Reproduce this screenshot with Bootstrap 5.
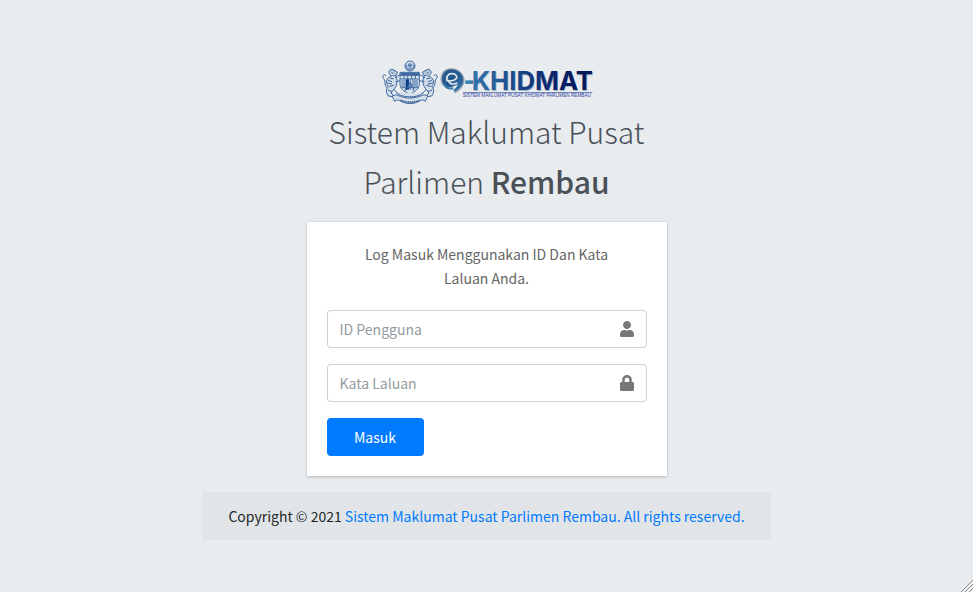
<!DOCTYPE html>
<html lang="ms">
<head>
<meta charset="utf-8">
<meta name="viewport" content="width=device-width, initial-scale=1">
<title>Log Masuk | e-Khidmat</title>
<link href="https://cdn.jsdelivr.net/npm/bootstrap@5.3.0/dist/css/bootstrap.min.css" rel="stylesheet">
<style>
body{background:#e9ecef;color:#212529;font-family:"Source Sans Pro","Noto Sans CJK SC",sans-serif;font-size:14px;line-height:24px}
.login-box{width:100%;max-width:360px}
.login-logo{font-size:30px;line-height:50px;font-weight:300;color:#495057;margin-bottom:16px}
.login-logo a{color:inherit}
.login-logo b{font-weight:500}
.login-card{background:#fff;padding:20px;box-shadow:0 0 1px rgba(0,0,0,.125),0 1px 3px rgba(0,0,0,.2);color:#666}
.login-msg{padding:0 20px;margin-bottom:20px}
.login-card .form-control,.login-card .input-group-text{border-color:#ced4da;font-size:14px;line-height:24px;border-radius:4px;height:38px}
.login-card .form-control{border-right:0}
.login-card .form-control::placeholder{color:#939ba2;opacity:1}
.login-card .input-group-text{background:#fff;color:#777}
.btn-login{background:#007bff;color:#fff;font-size:14px;line-height:24px;border-radius:4px;width:97px;height:38px}
.btn-login:hover{background:#0069d9;color:#fff}
.login-footer{background:#e2e5e8;padding:12px 26px}
.login-footer a{color:#007bff}
.logo-word{font-family:Inter,"Liberation Sans",sans-serif;font-weight:700;font-size:77px}
.logo-sub{font-family:"Liberation Sans",sans-serif;font-size:14px}
</style>
<script src="https://cdn.jsdelivr.net/npm/bootstrap@5.3.0/dist/js/bootstrap.bundle.min.js" defer></script>
</head>
<body class="min-vh-100 d-flex flex-column align-items-center justify-content-center position-relative">
<main class="login-box">
  <div class="login-logo text-center">
    <svg class="d-block mx-auto" width="220" height="54" viewBox="0 -12 660 162" role="img" aria-label="e-Khidmat">
      <defs>
        <linearGradient id="gw" gradientUnits="userSpaceOnUse" x1="260" y1="0" x2="650" y2="0"><stop offset="0" stop-color="#387fb3"/><stop offset=".35" stop-color="#1f4f91"/><stop offset=".7" stop-color="#08236c"/><stop offset="1" stop-color="#061752"/></linearGradient>
        <linearGradient id="ge" x1="0" y1="0" x2="1" y2="1"><stop offset="0" stop-color="#2c5f92"/><stop offset=".5" stop-color="#24568c"/><stop offset="1" stop-color="#387fb3"/></linearGradient>
        <g id="beast" fill="none" stroke="#3c669f" stroke-width="3" stroke-linecap="round">
          <path d="M36 31c-8-8-17 0-15 9l8 9 13-3 5-9-11-6z" fill="#bccbdc"/>
          <path d="M28 49C12 53 9 69 19 79c-9 8-7 20 0 29l13 2 1-6-6-5 11-14c9-12 9-27 3-38" fill="#d2dce7"/>
          <path d="M40 52l12-7 8 4M42 65l13-3 5 5M35 88l11 11 10 4M17 84C4 80 13 64 5 56c-7-9 2-17 7-9M19 61l10 4M17 69l12 3M23 79l11-3M19 91l10 3M29 37l4 3M25 55l9 1" />
        </g>
      </defs>
      <g transform="translate(9 12)">
        <use href="#beast" x="6"/>
        <use href="#beast" transform="translate(174 0) scale(-1 1)"/>
        <g fill="none" stroke="#4069a2" stroke-width="3">
          <circle cx="90" cy="18" r="15" fill="#dbe3eb"/>
          <path d="M79 14a12 12 0 1 0 22 0 12 9 0 1 1-22 0z" fill="#a9bdd5" stroke-width="2"/>
          <path d="M90 7l2 5 5-2-2 5 5 3-6 1 0 6-4-4-4 4 0-6-6-1 5-3-2-5 5 2z" fill="#5c80af" stroke="none"/>
          <path d="M60 37h58v34c0 17-15 25-29 31-15-6-29-14-29-31z" fill="#d8e1e9"/>
          <path d="M61 46h56M61 57h56M72 38v19M83 38v19M95 38v19M106 38v19"/>
          <path d="M61 38h56v8H61z" fill="#40699f" stroke="none"/>
          <path d="M64 58h12v24H64zM101 58h13v24h-13z" fill="#89a6c8" stroke="none"/>
          <path d="M77 58h10v31H77z" fill="#0d3c89" stroke="none"/>
          <path d="M91 58v31M99 58v30M64 83h50M76 84v10M101 84v9"/>
          <path d="M90 67l7 10-7 8-6-8z" fill="#5d82b4"/>
          <path d="M49 98c18 17 64 17 82 0M37 109c12-12 20 5 53 5s41-17 53-5l-7 15c-14-12-20 7-46 7s-33-19-46-7z" fill="#d4dee7"/>
          <path d="M61 121c17 7 42 7 59 0" stroke="#285391" stroke-width="5" stroke-dasharray="4 2"/>
        </g>
      </g>
      <g>
        <path d="M201 89c-14-16-9-45 17-49 24-3 44 16 42 36-2 16-14 26-27 34" fill="none" stroke="#a3adb8" stroke-width="6"/>
        <path d="M203 91c-16-18-8-48 16-51 22-3 41 15 40 34-1 14-9 23-25 33l-5-4c8-7 12-12 13-18-14 9-29 13-39 6z" fill="url(#ge)"/>
        <path d="M211 76c-6-13 3-24 15-23 13 1 17 11 9 17-6 5-15 5-21 4 4 11 14 13 27 6" fill="none" stroke="#dce5ed" stroke-width="5"/>
        <path d="M200 83c5 12 14 17 29 14" fill="none" stroke="#387fb3" stroke-width="6"/>
      </g>
      <path d="M265 73h23v11h-23z" fill="#397fb2"/>
      <text class="logo-word" x="286" y="106" fill="#a9b3be">KHIDMAT</text>
      <text class="logo-word" x="284" y="103" fill="url(#gw)">KHIDMAT</text>
      <path d="M258 109.500H646" stroke="#34539a" stroke-width="2"/>
      <text class="logo-sub" x="257" y="124" fill="#2940a0">SISTEM MAKLUMAT PUSAT KHIDMAT PARLIMEN REMBAU</text>
    </svg>
    <a href="#" class="text-decoration-none d-block">Sistem Maklumat Pusat Parlimen <b>Rembau</b></a>
  </div>
  <div class="login-card">
    <p class="login-msg text-center">Log Masuk Menggunakan ID Dan Kata Laluan Anda.</p>
    <form>
      <div class="input-group mb-3">
        <input type="text" class="form-control" id="userid" placeholder="ID Pengguna" aria-label="ID Pengguna">
        <label class="input-group-text" for="userid"><svg width="14" height="16" viewBox="0 0 448 512" fill="currentColor" aria-hidden="true"><path d="M224 256c70.700 0 128-57.300 128-128S294.700 0 224 0 96 57.300 96 128s57.300 128 128 128zm89.600 32h-16.700c-22.200 10.200-46.900 16-72.900 16s-50.600-5.800-72.900-16h-16.700C60.200 288 0 348.200 0 422.400V464c0 26.500 21.500 48 48 48h352c26.500 0 48-21.500 48-48v-41.600c0-74.200-60.200-134.400-134.400-134.400z"/></svg></label>
      </div>
      <div class="input-group mb-3">
        <input type="password" class="form-control" id="password" placeholder="Kata Laluan" aria-label="Kata Laluan">
        <label class="input-group-text" for="password"><svg width="14" height="16" viewBox="0 0 448 512" fill="currentColor" aria-hidden="true"><path d="M400 224h-24v-72C376 68.200 307.800 0 224 0S72 68.200 72 152v72H48c-26.500 0-48 21.500-48 48v192c0 26.500 21.500 48 48 48h352c26.500 0 48-21.500 48-48V272c0-26.500-21.500-48-48-48zm-104 0H152v-72c0-39.700 32.300-72 72-72s72 32.300 72 72v72z"/></svg></label>
      </div>
      <button type="submit" class="btn btn-login d-block">Masuk</button>
    </form>
  </div>
</main>
<footer class="login-footer mt-3">Copyright © 2021 <a href="#" class="text-decoration-none">Sistem Maklumat Pusat Parlimen Rembau. All rights reserved.</a></footer>
<svg class="position-absolute bottom-0 end-0" width="12" height="12" viewBox="0 0 12 12" aria-hidden="true"><path d="M0 12L12 0M4 12L12 4M8 12L12 8" stroke="#8b8e91" fill="none"/><path d="M2 12L12 2M6 12L12 6" stroke="#fff" fill="none"/></svg>
</body>
</html>
